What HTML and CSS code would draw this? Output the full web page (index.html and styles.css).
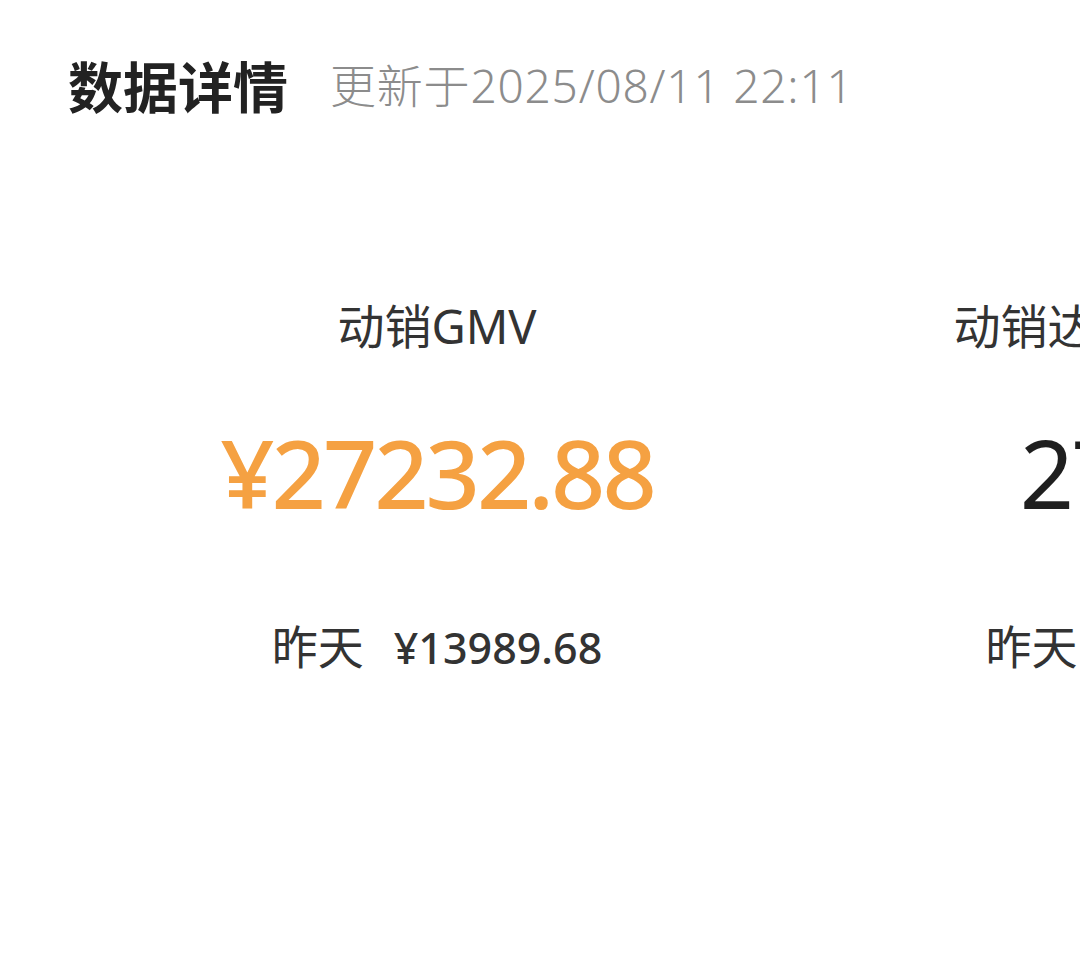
FILE: index.html
```html
<!DOCTYPE html>
<html lang="zh-CN">
<head>
<meta charset="utf-8">
<title>数据详情</title>
<link rel="stylesheet" href="styles.css">
</head>
<body>
<div class="page">
  <div class="header">
    <h1 class="title">数据详情</h1>
    <span class="updated">更新于2025/08/11 22:11</span>
  </div>
  <div class="cards">
    <div class="card">
      <div class="label">动销GMV</div>
      <div class="value value-accent">¥27232.88</div>
      <div class="yday"><span class="yday-label">昨天</span><span class="yday-num">¥13989.68</span></div>
    </div>
    <div class="card">
      <div class="label">动销达人数</div>
      <div class="value">27</div>
      <div class="yday"><span class="yday-label">昨天</span><span class="yday-num">15</span></div>
    </div>
  </div>
</div>
</body>
</html>
```
FILE: styles.css
```css
html, body {
  margin: 0;
  padding: 0;
  background: #ffffff;
}
body {
  width: 1080px;
  height: 964px;
  overflow: hidden;
  font-family: "Noto Sans", "Noto Sans CJK SC", sans-serif;
  color: #333333;
}
.page {
  width: 1080px;
  overflow: hidden;
}
.header {
  display: flex;
  align-items: center;
  gap: 42px;
  padding: 57px 0 0 68px;
}
.title {
  margin: 0;
  font-family: "Noto Sans CJK SC", sans-serif;
  font-size: 55px;
  font-weight: 700;
  line-height: 1;
  color: #222222;
}
.updated {
  font-size: 46px;
  line-height: 1;
  letter-spacing: 0.8px;
  color: #8c8c8c;
  font-weight: 300;
}
.cards {
  display: flex;
  padding-left: 120px;
  margin-top: 191px;
}
.card {
  flex: 0 0 634px;
  display: flex;
  flex-direction: column;
  align-items: center;
  text-align: center;
  white-space: nowrap;
}
.label {
  font-size: 47px;
  line-height: 1;
  color: #333333;
}
.value {
  margin-top: 75px;
  font-size: 95px;
  line-height: 1;
  letter-spacing: -3px;
  color: #1f1f1f;
}
.value-accent {
  color: #f5a142;
  font-weight: 500;
}
.yday {
  margin-top: 103px;
  display: flex;
  align-items: baseline;
  gap: 30px;
  line-height: 1;
}
.yday-label {
  font-size: 46px;
  color: #333333;
}
.yday-num {
  font-size: 43px;
  font-weight: 500;
  color: #333333;
}
```
